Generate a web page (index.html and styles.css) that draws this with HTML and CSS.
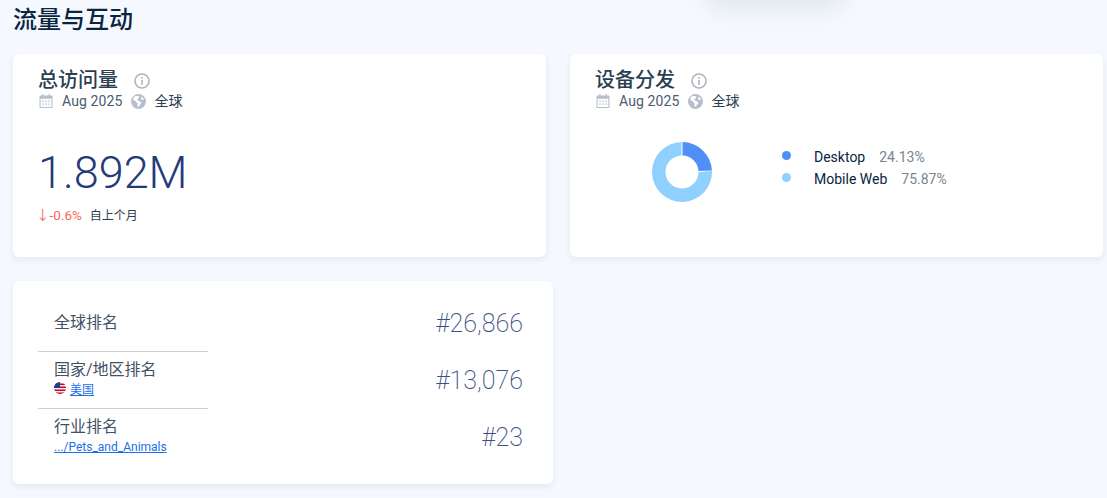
FILE: index.html
```html
<!DOCTYPE html>
<html lang="zh">
  <head>
    <meta charset="UTF-8" />
    <meta name="viewport" content="width=device-width, initial-scale=1.0" />
    <title>流量与互动</title>
    <link rel="stylesheet" href="styles.css">
  </head>
  <body>
    <div class="top-shadow"></div>
    <h1 class="section-title">流量与互动</h1>

    <div class="row">
      <section class="card card-half">
        <div class="card-head">
          <h2>总访问量</h2>
          <svg class="icon-info" viewBox="0 0 16 16"><circle cx="8" cy="8" r="7" /><rect x="7.2" y="7" width="1.6" height="4.8" /><rect x="7.2" y="4" width="1.6" height="1.7" /></svg>
        </div>
        <div class="card-meta">
          <svg class="icon-cal" viewBox="1 1 12 13"><path d="M1 2.5h2.5V1h1.2v1.5h4.6V1h1.2v1.5H13V14H1zM2 5.5V13h10V5.5z" /><path d="M3.5 7h1.4v1.2H3.5zM6.3 7h1.4v1.2H6.3zM9.1 7h1.4v1.2H9.1zM3.5 9.8h1.4V11H3.5zM6.3 9.8h1.4V11H6.3zM9.1 9.8h1.4V11H9.1z" /></svg>
          <span class="meta-date">Aug 2025</span>
          <svg class="icon-globe" viewBox="0 0 14 14"><path fill-rule="evenodd" d="M7 0a7 7 0 1 1 0 14A7 7 0 0 1 7 0zM4.2 1.8 2.2 3.6 2.5 6l2 .8.9 1.7.9.3-.4 2.2 1.4 1.2.8-2 1.4-1.3-.3-1.4L6.6 6l-.9-1.2 1.5-.9.6-1.5-1.7-.5zM10 2.5 9.2 4l1 1.4 1.9.4A5.4 5.4 0 0 0 10 2.5z" /></svg>
          <span class="meta-geo">全球</span>
        </div>
        <div class="big-number">1.892M</div>
        <div class="change">
          <span class="change-value">↓-0.6%</span>
          <span class="change-label">自上个月</span>
        </div>
      </section>

      <section class="card card-half">
        <div class="card-head">
          <h2>设备分发</h2>
          <svg class="icon-info" viewBox="0 0 16 16"><circle cx="8" cy="8" r="7" /><rect x="7.2" y="7" width="1.6" height="4.8" /><rect x="7.2" y="4" width="1.6" height="1.7" /></svg>
        </div>
        <div class="card-meta">
          <svg class="icon-cal" viewBox="1 1 12 13"><path d="M1 2.5h2.5V1h1.2v1.5h4.6V1h1.2v1.5H13V14H1zM2 5.5V13h10V5.5z" /><path d="M3.5 7h1.4v1.2H3.5zM6.3 7h1.4v1.2H6.3zM9.1 7h1.4v1.2H9.1zM3.5 9.8h1.4V11H3.5zM6.3 9.8h1.4V11H6.3zM9.1 9.8h1.4V11H9.1z" /></svg>
          <span class="meta-date">Aug 2025</span>
          <svg class="icon-globe" viewBox="0 0 14 14"><path fill-rule="evenodd" d="M7 0a7 7 0 1 1 0 14A7 7 0 0 1 7 0zM4.2 1.8 2.2 3.6 2.5 6l2 .8.9 1.7.9.3-.4 2.2 1.4 1.2.8-2 1.4-1.3-.3-1.4L6.6 6l-.9-1.2 1.5-.9.6-1.5-1.7-.5zM10 2.5 9.2 4l1 1.4 1.9.4A5.4 5.4 0 0 0 10 2.5z" /></svg>
          <span class="meta-geo">全球</span>
        </div>
        <div class="device-body">
          <svg class="donut" viewBox="0 0 60 60">
            <path fill="#8fd0ff" d="M60 29A30 30 0 1 1 29.5 0L29.5 13.5A16.5 16.5 0 1 0 46.5 30Z" />
            <path fill="#4f8ff7" d="M30.5 0A30 30 0 0 1 59.96 28.38L46.48 29.11A16.5 16.5 0 0 0 30.5 13.5Z" />
          </svg>
          <ul class="legend">
            <li><i class="dot dot-desktop"></i><span class="legend-name">Desktop</span><span class="legend-pct">24.13%</span></li>
            <li><i class="dot dot-mobile"></i><span class="legend-name">Mobile Web</span><span class="legend-pct">75.87%</span></li>
          </ul>
        </div>
      </section>
    </div>

    <section class="card card-ranks">
      <div class="rank-row">
        <div class="rank-label"><div class="rank-name">全球排名</div></div>
        <div class="rank-value">#26,866</div>
      </div>
      <div class="rank-row">
        <div class="rank-label">
          <div class="rank-name">国家/地区排名</div>
          <div class="rank-sub">
            <svg class="flag" viewBox="0 0 12 12">
              <clipPath id="flag-clip"><circle cx="6" cy="6" r="6" /></clipPath>
              <g clip-path="url(#flag-clip)">
                <rect width="12" height="12" fill="#f0f0f0" />
                <rect y="1.5" width="12" height="1.5" fill="#d80027" />
                <rect y="4.5" width="12" height="1.5" fill="#d80027" />
                <rect y="7.5" width="12" height="1.5" fill="#d80027" />
                <rect y="10.5" width="12" height="1.5" fill="#d80027" />
                <rect width="6" height="6" fill="#1f3f8f" />
              </g>
            </svg>
            <a href="#">美国</a>
          </div>
        </div>
        <div class="rank-value">#13,076</div>
      </div>
      <div class="rank-row">
        <div class="rank-label">
          <div class="rank-name">行业排名</div>
          <div class="rank-sub"><a href="#">.../Pets_and_Animals</a></div>
        </div>
        <div class="rank-value">#23</div>
      </div>
    </section>
  </body>
</html>
```

FILE: styles.css
```css
html,
body {
  margin: 0;
  padding: 0;
  height: 100%;
  overflow: hidden;
}
body {
  background: #f5f8fe;
  font-family: Roboto, 'Noto Sans CJK SC', sans-serif;
  color: #2a3e52;
  padding: 0 4px 0 13px;
  box-sizing: border-box;
}
.top-shadow {
  position: absolute;
  top: -30px;
  left: 715px;
  width: 120px;
  height: 30px;
  box-shadow: 0 0 24px 8px rgba(42, 62, 82, 0.1);
  border-radius: 6px;
}
.section-title {
  margin: 0;
  height: 54px;
  padding-top: 5px;
  box-sizing: border-box;
  font-size: 24px;
  line-height: 30px;
  font-weight: 500;
  color: #092540;
}
.row {
  display: flex;
  gap: 24px;
}
.card {
  background: #fff;
  border-radius: 6px;
  box-shadow: 0 3px 6px rgba(42, 62, 82, 0.08);
  box-sizing: border-box;
  height: 203px;
}
.card-half {
  width: 533px;
  padding: 14px 25px 0 25px;
}
.card-head {
  display: flex;
  align-items: center;
  height: 25px;
}
.card-head h2 {
  margin: 0;
  font-size: 20px;
  line-height: 25px;
  font-weight: 500;
  color: #2a3e52;
}
.icon-info {
  width: 16px;
  height: 16px;
  margin-left: 16px;
}
.icon-info circle {
  fill: none;
  stroke: #b0b3b8;
  stroke-width: 1.6;
}
.icon-info rect {
  fill: #b0b3b8;
}
.card-meta {
  display: flex;
  align-items: center;
  height: 16px;
  font-size: 14px;
  color: #4a5c70;
}
.icon-cal,
.icon-globe {
  width: 14px;
  height: 14px;
  fill: #b6bfcc;
}
.icon-cal {
  margin-left: 1px;
}
.meta-date {
  margin-left: 9px;
  letter-spacing: 0.1px;
}
.icon-globe {
  width: 15px;
  height: 15px;
  margin-left: 9px;
}
.meta-geo {
  margin-left: 8px;
  margin-bottom: 2px;
  color: #2a3e52;
}
.big-number {
  margin-top: 36px;
  font-size: 45px;
  line-height: 56px;
  font-weight: 300;
  color: #253a7a;
}
.change {
  display: flex;
  align-items: center;
  margin-top: 4px;
  height: 18px;
}
.change-value {
  margin-left: -2px;
  font-size: 13.5px;
  color: #fb6550;
}
.change-label {
  margin-left: 8px;
  font-size: 12px;
  color: #2a3e52;
}
.device-body {
  display: flex;
  align-items: flex-start;
  margin-top: 33px;
}
.donut {
  width: 60px;
  height: 60px;
  margin-left: 57px;
}
.legend {
  list-style: none;
  margin: 4px 0 0 69px;
  padding: 0;
  font-size: 14px;
}
.legend li {
  display: flex;
  align-items: center;
  height: 22px;
}
.dot {
  width: 9px;
  height: 9px;
  margin-top: -3px;
  margin-left: 1px;
  margin-right: 23px;
  border-radius: 50%;
}
.dot-desktop {
  background: #4f8ff7;
}
.dot-mobile {
  background: #8fd0ff;
}
.legend-name {
  color: #092540;
}
.legend-pct {
  margin-left: 14px;
  color: #7a838f;
}
.card-ranks {
  width: 540px;
  margin-top: 24px;
  padding: 14px 30px 0 25px;
}
.rank-row {
  display: flex;
  align-items: center;
  justify-content: space-between;
  height: 57px;
}
.rank-label {
  width: 170px;
  height: 100%;
  box-sizing: border-box;
  padding: 7px 0 0 16px;
  border-bottom: 1px solid #ccced3;
}
.rank-row:first-child .rank-label {
  padding-top: 17px;
}
.rank-row:last-child .rank-label {
  border-bottom: 0;
}
.rank-name {
  font-size: 16px;
  line-height: 22px;
  color: #3f5165;
}
.rank-sub {
  display: flex;
  align-items: center;
  font-size: 12px;
  line-height: 18px;
}
.rank-sub a {
  color: #1c6fe8;
}
.flag {
  width: 12px;
  height: 12px;
  margin-top: -4px;
  margin-right: 4px;
}
.rank-value {
  font-size: 25px;
  font-weight: 200;
  color: #3a4f85;
}
```
